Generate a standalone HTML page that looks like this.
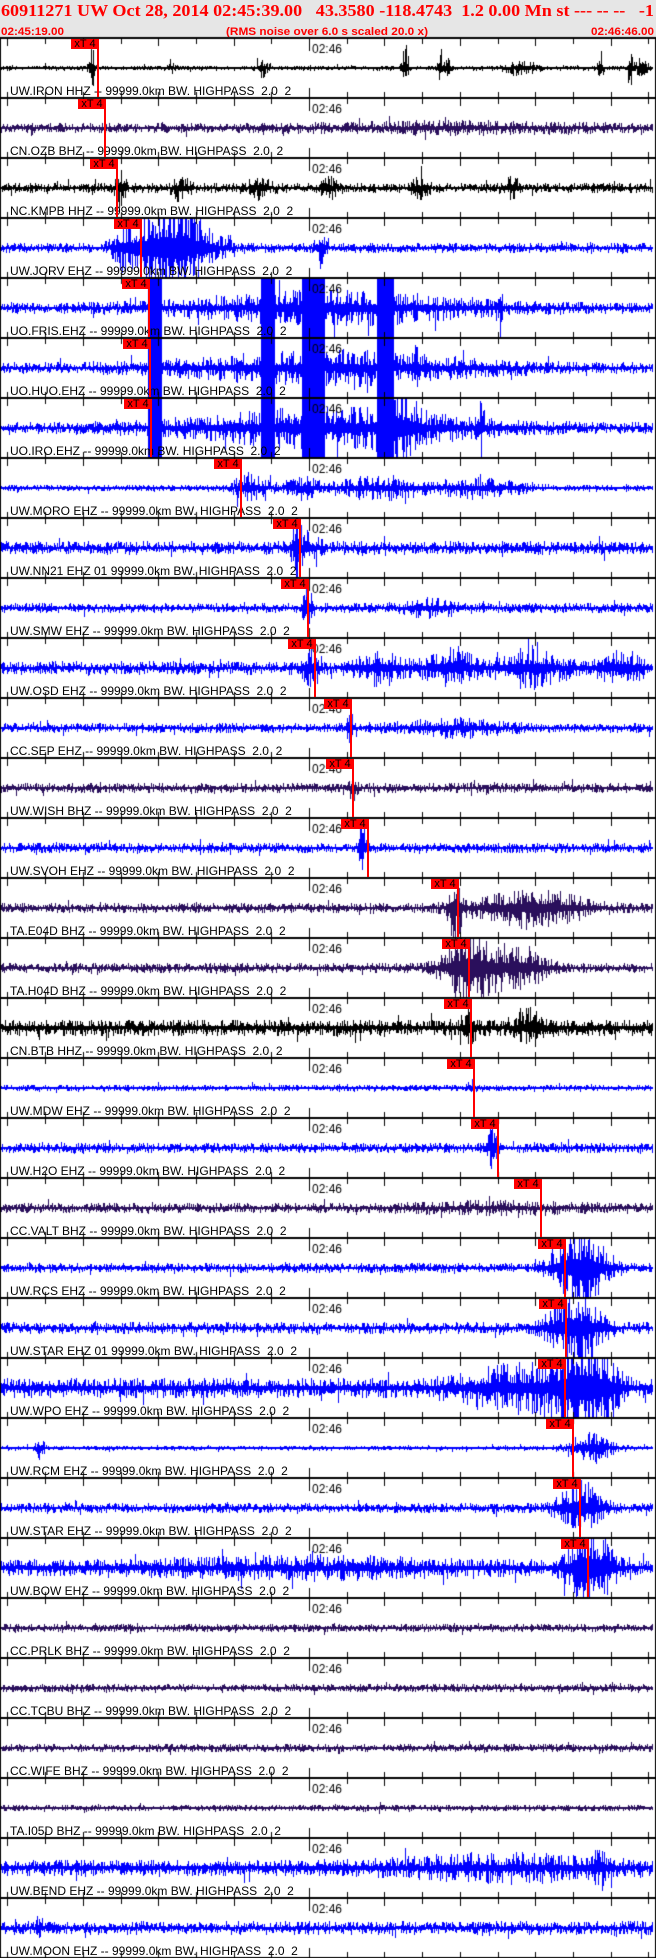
<!DOCTYPE html>
<html><head><meta charset="utf-8">
<style>
html,body{margin:0;padding:0;background:#fff;}
#wrap{position:relative;width:656px;height:1958px;overflow:hidden;background:#fff;}
#hdr{position:absolute;left:0;top:0;width:656px;height:37px;background:#e6e6e6;}
canvas{position:absolute;left:0;top:0;}
.t{position:absolute;font-family:"Liberation Sans",Arial,sans-serif;font-size:12px;line-height:12px;color:#000;white-space:pre;}
.pk{position:absolute;width:28px;height:10px;background:#ff0000;font-family:"Liberation Sans",Arial,sans-serif;font-size:11px;line-height:10px;color:#000;text-align:center;}
.pl{position:absolute;width:2px;background:#ff0000;}
</style></head><body>
<div id="wrap">
<div id="hdr">
<svg width="656" height="37" style="position:absolute;left:0;top:0">
<text x="1" y="16" textLength="653" lengthAdjust="spacingAndGlyphs" font-family="Liberation Serif,serif" font-weight="bold" font-size="17" fill="#f00" style="white-space:pre">60911271 UW Oct 28, 2014 02:45:39.00   43.3580 -118.4743  1.2 0.00 Mn st --- -- --   -1</text>
<text x="1" y="35" textLength="63" lengthAdjust="spacingAndGlyphs" font-family="Liberation Sans,sans-serif" font-weight="bold" font-size="11" fill="#f00">02:45:19.00</text>
<text x="226" y="35" textLength="202" lengthAdjust="spacingAndGlyphs" font-family="Liberation Sans,sans-serif" font-weight="bold" font-size="11" fill="#f00">(RMS noise over 6.0 s scaled 20.0 x)</text>
<text x="591" y="35" textLength="63" lengthAdjust="spacingAndGlyphs" font-family="Liberation Sans,sans-serif" font-weight="bold" font-size="11" fill="#f00">02:46:46.00</text>
</svg>
</div>
<canvas id="c" width="656" height="1958"></canvas>
<div class="t" style="left:10px;top:85px">UW.IRON HHZ -- 99999.0km BW. HIGHPASS  2.0  2</div>
<div class="t" style="left:10px;top:145px">CN.OZB BHZ -- 99999.0km BW. HIGHPASS  2.0  2</div>
<div class="t" style="left:10px;top:205px">NC.KMPB HHZ -- 99999.0km BW. HIGHPASS  2.0  2</div>
<div class="t" style="left:10px;top:265px">UW.JORV EHZ -- 99999.0km BW. HIGHPASS  2.0  2</div>
<div class="t" style="left:10px;top:325px">UO.FRIS.EHZ -- 99999.0km BW. HIGHPASS  2.0  2</div>
<div class="t" style="left:10px;top:385px">UO.HUO.EHZ -- 99999.0km BW. HIGHPASS  2.0  2</div>
<div class="t" style="left:10px;top:445px">UO.IRO.EHZ -- 99999.0km BW. HIGHPASS  2.0  2</div>
<div class="t" style="left:10px;top:505px">UW.MORO EHZ -- 99999.0km BW. HIGHPASS  2.0  2</div>
<div class="t" style="left:10px;top:565px">UW.NN21 EHZ 01 99999.0km BW. HIGHPASS  2.0  2</div>
<div class="t" style="left:10px;top:625px">UW.SMW EHZ -- 99999.0km BW. HIGHPASS  2.0  2</div>
<div class="t" style="left:10px;top:685px">UW.OSD EHZ -- 99999.0km BW. HIGHPASS  2.0  2</div>
<div class="t" style="left:10px;top:745px">CC.SEP EHZ -- 99999.0km BW. HIGHPASS  2.0  2</div>
<div class="t" style="left:10px;top:805px">UW.WISH BHZ -- 99999.0km BW. HIGHPASS  2.0  2</div>
<div class="t" style="left:10px;top:865px">UW.SVOH EHZ -- 99999.0km BW. HIGHPASS  2.0  2</div>
<div class="t" style="left:10px;top:925px">TA.E04D BHZ -- 99999.0km BW. HIGHPASS  2.0  2</div>
<div class="t" style="left:10px;top:985px">TA.H04D BHZ -- 99999.0km BW. HIGHPASS  2.0  2</div>
<div class="t" style="left:10px;top:1045px">CN.BTB HHZ -- 99999.0km BW. HIGHPASS  2.0  2</div>
<div class="t" style="left:10px;top:1105px">UW.MDW EHZ -- 99999.0km BW. HIGHPASS  2.0  2</div>
<div class="t" style="left:10px;top:1165px">UW.H2O EHZ -- 99999.0km BW. HIGHPASS  2.0  2</div>
<div class="t" style="left:10px;top:1225px">CC.VALT BHZ -- 99999.0km BW. HIGHPASS  2.0  2</div>
<div class="t" style="left:10px;top:1285px">UW.RCS EHZ -- 99999.0km BW. HIGHPASS  2.0  2</div>
<div class="t" style="left:10px;top:1345px">UW.STAR EHZ 01 99999.0km BW. HIGHPASS  2.0  2</div>
<div class="t" style="left:10px;top:1405px">UW.WPO EHZ -- 99999.0km BW. HIGHPASS  2.0  2</div>
<div class="t" style="left:10px;top:1465px">UW.RCM EHZ -- 99999.0km BW. HIGHPASS  2.0  2</div>
<div class="t" style="left:10px;top:1525px">UW.STAR EHZ -- 99999.0km BW. HIGHPASS  2.0  2</div>
<div class="t" style="left:10px;top:1585px">UW.BOW EHZ -- 99999.0km BW. HIGHPASS  2.0  2</div>
<div class="t" style="left:10px;top:1645px">CC.PRLK BHZ -- 99999.0km BW. HIGHPASS  2.0  2</div>
<div class="t" style="left:10px;top:1705px">CC.TCBU BHZ -- 99999.0km BW. HIGHPASS  2.0  2</div>
<div class="t" style="left:10px;top:1765px">CC.WIFE BHZ -- 99999.0km BW. HIGHPASS  2.0  2</div>
<div class="t" style="left:10px;top:1825px">TA.I05D BHZ -- 99999.0km BW. HIGHPASS  2.0  2</div>
<div class="t" style="left:10px;top:1885px">UW.BEND EHZ -- 99999.0km BW. HIGHPASS  2.0  2</div>
<div class="t" style="left:10px;top:1945px">UW.MOON EHZ -- 99999.0km BW. HIGHPASS  2.0  2</div>
<div id="marks"></div>
</div>
<script>
(function(){
var P=32,T0=37,H=60;
var BL='#0000ff',PU='#2a0f5c',BK='#000000';
var tr=[
[BK,1.5,98,[[92,4,12],[170,6,4],[262,6,5],[405,4,14],[440,3,12],[447,3,10],[520,20,4],[600,3,12],[630,3,14],[640,8,6]]],
[PU,3,105,[[450,150,2]]],
[BK,3,117,[[120,6,10],[180,10,6],[260,15,5],[330,10,5],[420,10,5],[510,10,5]]],
[BL,3,141,[[170,45,30],[125,12,8],[320,6,9]]],
[BL,3.5,149,[[330,170,8],[500,2,20]],[[148,161],[261,274],[302,324],[377,393]]],
[BL,3.5,150,[[330,170,8],[415,3,16]],[[148,161],[261,274],[302,324],[377,393]]],
[BL,3.5,151,[[330,170,10],[400,20,16],[480,5,12]],[[148,161],[261,274],[302,324],[377,393]]],
[BL,2,241,[[250,20,8],[300,25,5],[380,60,6],[480,50,5]]],
[BL,4,300,[[296,4,25],[305,15,8]]],
[BL,3,308,[[308,6,12],[430,30,4]]],
[BL,4,315,[[310,8,12],[380,30,8],[450,30,10],[530,40,10],[620,30,8]]],
[BL,3,351,[[350,6,8],[450,60,4]]],
[PU,3,353,[[352,5,6]]],
[BL,3,368,[[362,4,16]]],
[PU,3,458,[[455,8,20],[530,70,10]]],
[PU,3,469,[[470,30,25],[520,30,12]]],
[BK,5,471,[[468,10,8],[530,20,8]]],
[BL,2,474,[[470,6,4]]],
[BL,3,498,[[492,5,13]]],
[PU,3,541,[[500,100,2]]],
[BL,3,565,[[580,30,25]]],
[BL,3.5,566,[[575,30,22]]],
[BL,6,565,[[520,70,10],[585,35,30]]],
[BL,1.5,573,[[40,6,6],[590,25,9]]],
[BL,3,580,[[580,25,16]]],
[BL,5,588,[[590,25,25],[300,200,3]]],
[PU,2.5,0,[]],[PU,2.5,0,[]],[PU,2.5,0,[]],[PU,2,0,[]],
[BL,5,0,[[500,120,5],[600,10,8]]],
[BL,4,0,[[40,5,3]]]
];
var seed=12345;function rnd(){seed=(seed*16807)%2147483647;return seed/2147483647;}
var c=document.getElementById('c').getContext('2d');
for(var i=0;i<P;i++){
 var t=tr[i],ptop=T0+H*i,cy=ptop+31;
 c.fillStyle=t[0];
 c.fillRect(1,cy-1,652,2);
 for(var x=1;x<653;x++){
  var a=t[1];
  var bs=t[3];
  for(var k=0;k<bs.length;k++){var d=(x-bs[k][0])/bs[k][1];if(Math.abs(d)<1.5)a+=bs[k][2]*Math.exp(-d*d*1.5);}
  var bl=t[4]||[];var full=false;
  for(var k=0;k<bl.length;k++)if(x>=bl[k][0]&&x<=bl[k][1])full=true;
  var up,dn;
  if(full){up=29;dn=29;}
  else{
   var r1=rnd(),r2=rnd();
   up=a*(0.3+r1*r1*1.4);dn=a*(0.3+r2*r2*1.4);
   if(rnd()<0.03){up*=1.8;} if(rnd()<0.03){dn*=1.8;}
   up=Math.min(up,29);dn=Math.min(dn,29);
  }
  c.fillRect(x,Math.round(cy-up),1,Math.max(1,Math.round(up+dn)));
 }
}
c.fillStyle='#000';
c.fillRect(0,37,1,1921);c.fillRect(655,37,1,1921);
for(var i=0;i<=P;i++){
 var y=T0+H*i;
 c.fillRect(0,y,656,2);
 for(var k=-8;k<=9;k++){
  var tx=Math.round(309+37.7*k);if(tx<1||tx>655)continue;
  var big=(k==0),med=(k%2==0);
  var h=big?12:(med?7:5);
  if(i<P)c.fillRect(tx,y+2,1,h);
  if(i>0)c.fillRect(tx,y-(big?9:5),1,big?9:5);
 }
}
c.font='12px "Liberation Sans",Arial,sans-serif';c.textBaseline='top';
for(var i=0;i<P;i++){c.fillStyle='#000';c.fillText('02:46',312,T0+H*i+7);}
var m='';
for(var i=0;i<P;i++){var px=tr[i][2];if(!px)continue;var pt=T0+H*i+2;
 m+='<div class="pk" style="left:'+(px-27)+'px;top:'+pt+'px">xT 4</div><div class="pl" style="left:'+(px-1)+'px;top:'+pt+'px;height:'+(H-2)+'px"></div>';}
document.getElementById('marks').innerHTML=m;
})();
</script>
</body></html>
